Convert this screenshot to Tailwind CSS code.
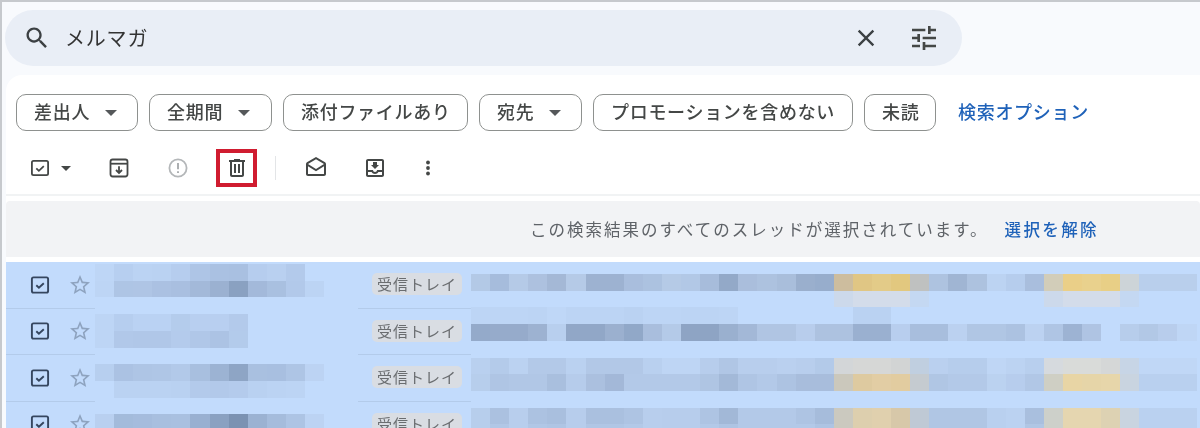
<!DOCTYPE html>
<html lang="ja">
<head>
    <meta charset="UTF-8">
    <title>メルマガ - 検索結果</title>
    <script src="https://cdn.jsdelivr.net/npm/@tailwindcss/browser@4"></script>
</head>
<body class="overflow-hidden">
<div class="relative h-[428px] w-[1200px] overflow-hidden bg-[#f8fafd] border-t-2 border-l-2 border-[#c6c9cd] font-['Noto_Sans_CJK_JP','Noto_Sans',sans-serif] blur-[0.4px]">

    <!-- search -->
    <div class="ml-[3px] mt-2 flex h-[56px] w-[957px] items-center rounded-full bg-[#e9eef6] text-[#3c4043]">
        <svg class="ml-[18px] h-[28px] w-[28px]" viewBox="0 0 24 24" fill="#3c4043"><path d="M15.5 14h-.79l-.28-.27C15.41 12.59 16 11.11 16 9.5 16 5.91 13.09 3 9.5 3S3 5.91 3 9.5 5.91 16 9.5 16c1.61 0 3.09-.59 4.23-1.57l.27.28v.79l5 4.99L20.49 19l-4.99-5zm-6 0C7.01 14 5 11.99 5 9.5S7.01 5 9.5 5 14 7.01 14 9.5 11.99 14 9.5 14z"/></svg>
        <span class="ml-[14px] text-[20px] tracking-[0.8px] text-[#333]">メルマガ</span>
        <svg class="ml-auto h-[28px] w-[28px]" viewBox="0 0 24 24" fill="#3c4043"><path d="M19 6.41L17.59 5 12 10.59 6.41 5 5 6.41 10.59 12 5 17.59 6.41 19 12 13.41 17.59 19 19 17.59 13.41 12z"/></svg>
        <svg class="ml-[28px] mr-[22px] h-[32px] w-[32px]" viewBox="0 0 24 24" fill="#444746"><path d="M3 17v2h6v-2H3zM3 5v2h10V5H3zm10 16v-2h8v-2h-8v-2h-2v6h2zM7 9v2H3v2h4v2h2V9H7zm14 4v-2H11v2h10zm-6-4h2V7h4V5h-4V3h-2v6z"/></svg>
    </div>

    <!-- panel -->
    <div class="ml-1 mt-[9px] rounded-tl-[16px] bg-white">
        <div class="flex gap-[11px] pl-[10px] pt-[19px] text-[18px] font-medium leading-none tracking-[0.7px] text-[#444746]">
            <button class="flex h-[37px] w-[122px] items-center rounded-[10px] border border-[#8e918f] pb-[3px] pl-[17px]">差出人<span class="ml-[15px] mt-[3px] h-0 w-0 border-x-[6px] border-t-[6px] border-x-transparent border-t-[#55585a]"></span></button>
            <button class="flex h-[37px] w-[123px] items-center rounded-[10px] border border-[#8e918f] pb-[3px] pl-[17px]">全期間<span class="ml-[15px] mt-[3px] h-0 w-0 border-x-[6px] border-t-[6px] border-x-transparent border-t-[#55585a]"></span></button>
            <button class="flex h-[37px] w-[185px] items-center rounded-[10px] border border-[#8e918f] pb-[3px] pl-[17px]">添付ファイルあり</button>
            <button class="flex h-[37px] w-[103px] items-center rounded-[10px] border border-[#8e918f] pb-[3px] pl-[17px]">宛先<span class="ml-[15px] mt-[3px] h-0 w-0 border-x-[6px] border-t-[6px] border-x-transparent border-t-[#55585a]"></span></button>
            <button class="flex h-[37px] w-[260px] items-center rounded-[10px] border border-[#8e918f] pb-[3px] pl-[17px]">プロモーションを含めない</button>
            <button class="flex h-[37px] w-[72px] items-center rounded-[10px] border border-[#8e918f] pb-[3px] pl-[17px]">未読</button>
            <a class="ml-[11px] flex items-center pb-[3px] text-[#1f62b9]">検索オプション</a>
        </div>

        <!-- toolbar -->
        <div class="flex h-[65px] items-center border-b-2 border-[#f1f3f4] pt-[11px]">
            <svg class="ml-[22px] h-[24px] w-[24px]" viewBox="0 0 24 24" fill="none" stroke="#444746" stroke-width="1.8"><rect x="3.9" y="4.9" width="16.2" height="14.2" rx="1.6"/><path d="M8.3 12.3l2.6 2.5 4.9-4.6"/></svg>
            <span class="ml-[9px] h-0 w-0 border-x-[5px] border-t-[5px] border-x-transparent border-t-[#444746]"></span>
            <svg class="ml-[36px] h-[24px] w-[24px]" viewBox="0 0 24 24" fill="none" stroke="#444746" stroke-width="1.8"><rect x="3.5" y="3.5" width="17" height="17" rx="2.2"/><path d="M4 7.7h16"/><path d="M12 10.2v6.5M9 14l3 3 3-3"/></svg>
            <svg class="ml-[35px] h-[24px] w-[24px]" viewBox="0 0 24 24" fill="none" stroke="#b4b7b9" stroke-width="1.8"><circle cx="12" cy="12" r="8.6"/><path d="M12 7v6.2M12 15.2v1.8" stroke="#a4a7a9"/></svg>
            <div class="ml-[26px] flex h-[38px] w-[41px] items-center justify-center border-[4px] border-[#d01c30]">
                <svg class="h-[24px] w-[24px]" viewBox="0 0 24 24" fill="#444746"><path d="M15 4V3H9v1H4v2h1v13c0 1.1.9 2 2 2h10c1.1 0 2-.9 2-2V6h1V4h-5zm2 15H7V6h10v13zM9 8h2v9H9zm4 0h2v9h-2z"/></svg>
            </div>
            <span class="ml-[18px] h-[24px] w-px bg-[#e3e5e7]"></span>
            <svg class="ml-[28px] h-[24px] w-[24px]" viewBox="0 0 24 24" fill="#444746"><path d="M21.99 8c0-.72-.37-1.35-.94-1.7L12 1 2.95 6.3C2.38 6.65 2 7.28 2 8v10c0 1.1.9 2 2 2h16c1.1 0 2-.9 2-2l-.01-10zM20 8v.01L12 13 4 8l8-4.68L20 8zM4 18v-7.66l8 5.02 7.99-4.99L20 18H4z"/></svg>
            <svg class="ml-[35px] h-[24px] w-[24px]" viewBox="0 0 24 24" fill="#444746"><path d="M19 3H5c-1.1 0-2 .9-2 2v14c0 1.1.9 2 2 2h14c1.1 0 2-.9 2-2V5c0-1.1-.9-2-2-2zm0 16H5v-3h3.56c.69 1.19 1.97 2 3.45 2s2.75-.81 3.45-2H19v3zm0-5h-4.99c0 1.1-.9 2-2 2s-2-.9-2-2H5V5h14v9zm-3-5h-2V6h-4v3H8l4 4 4-4z"/></svg>
            <svg class="ml-[29px] h-[24px] w-[24px]" viewBox="0 0 24 24" fill="#444746"><circle cx="12" cy="6.5" r="1.9"/><circle cx="12" cy="12" r="1.9"/><circle cx="12" cy="17.5" r="1.9"/></svg>
        </div>

        <!-- selection banner -->
        <div class="mt-[5px] flex h-[56px] items-center justify-end rounded-t-[4px] bg-[#f2f3f5] pr-[101px] text-[16.5px] tracking-[2px] text-[#5f6368]">
            <span>この検索結果のすべてのスレッドが選択されています。</span>
            <a class="ml-[16px] font-medium tracking-[2.4px] text-[#1f62b9]">選択を解除</a>
        </div>

        <!-- rows -->
        <div class="mt-[5px] bg-[#c2dbfc]" id="rows">
            <div class="flex h-[46.5px]">
                <div class="flex w-[89px] items-center border-b border-[#b3cbea]">
                    <svg class="ml-[22px] h-[24px] w-[24px]" viewBox="0 0 24 24" fill="none" stroke="#35465f" stroke-width="1.9"><rect x="3.9" y="4.4" width="16.2" height="15.2" rx="1.6"/><path d="M8.3 12.3l2.6 2.5 4.9-4.6"/></svg>
                    <svg class="ml-[16px] h-[24px] w-[24px]" viewBox="0 0 24 24" fill="#8ea3bf"><path d="M22 9.24l-7.19-.62L12 2 9.19 8.63 2 9.24l5.46 4.73L5.82 21 12 17.27 18.18 21l-1.63-7.03L22 9.24zM12 15.4l-3.76 2.27 1-4.28-3.32-2.88 4.38-.38L12 6.1l1.71 4.04 4.38.38-3.32 2.88 1 4.28L12 15.4z"/></svg>
                </div>
                <div class="w-[263px]"></div>
                <div class="flex w-[113px] items-center border-b border-[#b3cbea] pb-px">
                    <span class="ml-[14px] rounded-[5px] bg-[#d9dde3] px-[5px] text-[15px] leading-[22px] tracking-[1px] text-[#6a6d70]">受信トレイ</span>
                </div>
            </div>
            <div class="flex h-[46.5px]">
                <div class="flex w-[89px] items-center border-b border-[#b3cbea]">
                    <svg class="ml-[22px] h-[24px] w-[24px]" viewBox="0 0 24 24" fill="none" stroke="#35465f" stroke-width="1.9"><rect x="3.9" y="4.4" width="16.2" height="15.2" rx="1.6"/><path d="M8.3 12.3l2.6 2.5 4.9-4.6"/></svg>
                    <svg class="ml-[16px] h-[24px] w-[24px]" viewBox="0 0 24 24" fill="#8ea3bf"><path d="M22 9.24l-7.19-.62L12 2 9.19 8.63 2 9.24l5.46 4.73L5.82 21 12 17.27 18.18 21l-1.63-7.03L22 9.24zM12 15.4l-3.76 2.27 1-4.28-3.32-2.88 4.38-.38L12 6.1l1.71 4.04 4.38.38-3.32 2.88 1 4.28L12 15.4z"/></svg>
                </div>
                <div class="w-[263px]"></div>
                <div class="flex w-[113px] items-center border-b border-[#b3cbea] pb-px">
                    <span class="ml-[14px] rounded-[5px] bg-[#d9dde3] px-[5px] text-[15px] leading-[22px] tracking-[1px] text-[#6a6d70]">受信トレイ</span>
                </div>
            </div>
            <div class="flex h-[46.5px]">
                <div class="flex w-[89px] items-center border-b border-[#b3cbea]">
                    <svg class="ml-[22px] h-[24px] w-[24px]" viewBox="0 0 24 24" fill="none" stroke="#35465f" stroke-width="1.9"><rect x="3.9" y="4.4" width="16.2" height="15.2" rx="1.6"/><path d="M8.3 12.3l2.6 2.5 4.9-4.6"/></svg>
                    <svg class="ml-[16px] h-[24px] w-[24px]" viewBox="0 0 24 24" fill="#8ea3bf"><path d="M22 9.24l-7.19-.62L12 2 9.19 8.63 2 9.24l5.46 4.73L5.82 21 12 17.27 18.18 21l-1.63-7.03L22 9.24zM12 15.4l-3.76 2.27 1-4.28-3.32-2.88 4.38-.38L12 6.1l1.71 4.04 4.38.38-3.32 2.88 1 4.28L12 15.4z"/></svg>
                </div>
                <div class="w-[263px]"></div>
                <div class="flex w-[113px] items-center border-b border-[#b3cbea] pb-px">
                    <span class="ml-[14px] rounded-[5px] bg-[#d9dde3] px-[5px] text-[15px] leading-[22px] tracking-[1px] text-[#6a6d70]">受信トレイ</span>
                </div>
            </div>
            <div class="flex h-[46.5px]">
                <div class="flex w-[89px] items-center border-b border-[#b3cbea]">
                    <svg class="ml-[22px] h-[24px] w-[24px]" viewBox="0 0 24 24" fill="none" stroke="#35465f" stroke-width="1.9"><rect x="3.9" y="4.4" width="16.2" height="15.2" rx="1.6"/><path d="M8.3 12.3l2.6 2.5 4.9-4.6"/></svg>
                    <svg class="ml-[16px] h-[24px] w-[24px]" viewBox="0 0 24 24" fill="#8ea3bf"><path d="M22 9.24l-7.19-.62L12 2 9.19 8.63 2 9.24l5.46 4.73L5.82 21 12 17.27 18.18 21l-1.63-7.03L22 9.24zM12 15.4l-3.76 2.27 1-4.28-3.32-2.88 4.38-.38L12 6.1l1.71 4.04 4.38.38-3.32 2.88 1 4.28L12 15.4z"/></svg>
                </div>
                <div class="w-[263px]"></div>
                <div class="flex w-[113px] items-center border-b border-[#b3cbea] pb-px">
                    <span class="ml-[14px] rounded-[5px] bg-[#d9dde3] px-[5px] text-[15px] leading-[22px] tracking-[1px] text-[#6a6d70]">受信トレイ</span>
                </div>
            </div>
        </div>
    </div>

    <!-- mosaic over sender and body -->
    <div id="sender" class="absolute left-[93px] top-[262px] grid auto-rows-[16.72px] grid-cols-[repeat(12,19.1px)]"></div>
    <div id="subject" class="absolute left-[469px] top-[272px] grid auto-rows-[16.72px] grid-cols-[repeat(38,19.1px)]"></div>
</div>

<script>
    // mosaic colours, one string per band, "-" is an empty cell
    const senderCells = [
        'bed6f6 b7cff0 bbd3f3 bad2f2 b6cdee aec5e6 aac1e2 a9c0e1 b6cdee b9d0f0 b3caeb -',
        'bdd5f5 aec5e5 afc5e5 abc1e2 a9bfe0 a3b9d9 9bb1d1 8aa1c1 a3b9da a9c0e0 b2c9ea bcd4f4',
        '- - - - - - - - - - - -',
        'bdd5f5 b6ceef bad2f3 bad2f3 b4ccec b8cff0 b8cff0 b3caeb - - - -',
        'bdd5f5 b1c8e9 b0c7e8 b0c7e8 b4cbec b0c7e8 acc3e4 b3cbeb - - - -',
        '- - - - - - - - - - - -',
        'b7cfef abc2e3 aec5e5 afc6e6 b2c9e9 a8bfdf 9cb3d3 8ea5c5 a9c0e0 a8bfe0 aec5e5 bcd3f3',
        '- bad2f2 bad2f2 bad2f2 b9d1f1 b3caeb b2c9ea b4cbec b9d1f1 bbd3f3 bcd4f4 -',
        '- - - - - - - - - - - -',
        'b9d0f0 a3bbdb a5bcdd a8bfdf a9c0e0 99b0d1 8aa1c1 7b92b2 9bb2d2 a5bcdc adc4e4 bcd3f3'
    ];
    const subjectCells = [
        'b3c9e6 a6bcdc b5cae7 adc1df a4b8d6 b5cae7 9db2d1 9db2d1 a9bedd acc2e0 b5cae6 b2c8e6 a7bcdb 93a9c8 aabedc adc2df a9bedb 9aafcd 97adcc cdbd9e e0c684 e3cb88 e2c87f bfc1c0 aec3e0 a0b5d3 adc2df bcd3f2 b6cded a9bedd d2cdb9 eacf88 e9d18d e8cf86 cdd4d8 b9cfec b9cfec b9cfec',
        '- - - - - - - - - - - - - - - - - - - ccd9eb d3dcea d3dcea d3dcea c4d8f2 - - - - - - ccd9eb d3dcea d3dcea d3dcea c4d8f2 - - -',
        'bdd5f5 bdd5f5 bdd5f5 bcd4f4 bfd7f7 bcd4f4 bcd4f4 bcd4f4 bad2f2 bdd5f5 bdd5f5 bcd4f4 bcd4f4 bdd5f5 - - - - - - bad2f2 bad2f2 - - - - - - - - - - - - - - - -',
        '94aaca 96abcb 96abcb 9db2d1 b8cfee 91a7c7 91a7c7 9bb0cf 91a8c8 a9bedd b4cae8 8ea4c4 8ea4c4 9ab0cf a3b8d7 b0c5e3 b0c5e3 b8cdec adc2e0 adc2e0 9ab0d0 9ab0d0 b8ceee a8bedd a8bedd bbd1f0 b0c6e4 b0c6e4 acc2e1 bcd2f1 afc5e4 9db3d3 afc4e3 - b7cdeb b2c8e6 b8cdec bfd6f5',
        '- - - - - - - - - - - - - - - - - - - - - - - - - - - - - - - - - - - - - -',
        'b9d0ef b4cbea bbd2f1 b3c9e8 b3c9e8 bad1f0 b2c8e7 b2c8e7 b2c8e7 b9d0ef bed5f4 bed5f4 b7cdec b0c6e5 b8ceed b8ceed bad0ef b8ceed b3cae9 d3d6d8 d6d7d6 d6d7d6 d2d4d4 c0cfe0 bad0ef b6cdec b6cdec bfd6f5 bcd3f2 b8cfee d6dade d9dbd9 d9dbd9 d5d7d7 c7d5e6 c0d7f6 c0d7f6 c0d7f6',
        'b7ceec afc5e4 b1c7e6 b1c7e6 a9bfde b6cceb abc0df a3b8d8 b3c9e8 b3c9e8 b3c9e8 b3c9e8 afc5e3 a3b9d8 afc5e4 b3c9e8 adc3e2 a8bddc a8bddc cbc8bc decaa0 e2cda4 e2cca0 c5cbd0 b0c6e4 b3c9e8 b3c9e8 bbd2f0 b7cded b1c7e6 cfcfc4 e8d5a5 e6d5a8 e7d6aa c9d4e0 b9d0ef b9d0ef b9d0ef',
        '- - - - - - - - - - - - - - - - - - - - - - - - - - - - - - - - - - - - - -',
        'b7ceec abc1e0 b8ceed acc2e1 a9bfde b7cdec aac0df aac0df aec4e3 b8ceed b7cdec b7cdec aec4e3 a2b8d7 b3c9e8 b3c9e8 b3c9e8 aec4e3 a6bcdb cbc9bf ddcfae e0d0ae d7c8a9 bfc9d5 b0c6e4 b0c6e4 b0c6e4 b9d0ef bbd2f1 a9bfde cdd0ca e5d6b0 e5d6b0 ddd2b3 c9d4e0 bad1f0 bad1f0 bad1f0',
        'b7ceec b1c7e6 b8ceed b1c7e6 afc5e4 b7cdec b0c6e5 b0c6e5 b3c9e8 b8ceed b7cdec b7cdec b3c9e8 aec4e3 b3c9e8 b3c9e8 b3c9e8 b3c9e8 aec4e3 cbc9bf ddcfae e0d0ae d7c8a9 bfc9d5 b0c6e4 b0c6e4 b0c6e4 b9d0ef bbd2f1 b0c6e4 cdd0ca e5d6b0 e5d6b0 ddd2b3 c9d4e0 bad1f0 bad1f0 bad1f0'
    ];

    function fillMosaic(id, bands) {
        const grid = document.getElementById(id);
        bands.forEach(band => {
            band.split(' ').forEach(color => {
                const cell = document.createElement('div');
                if (color !== '-') cell.style.background = '#' + color;
                grid.appendChild(cell);
            });
        });
    }

    fillMosaic('sender', senderCells);
    fillMosaic('subject', subjectCells);
</script>
</body>
</html>
